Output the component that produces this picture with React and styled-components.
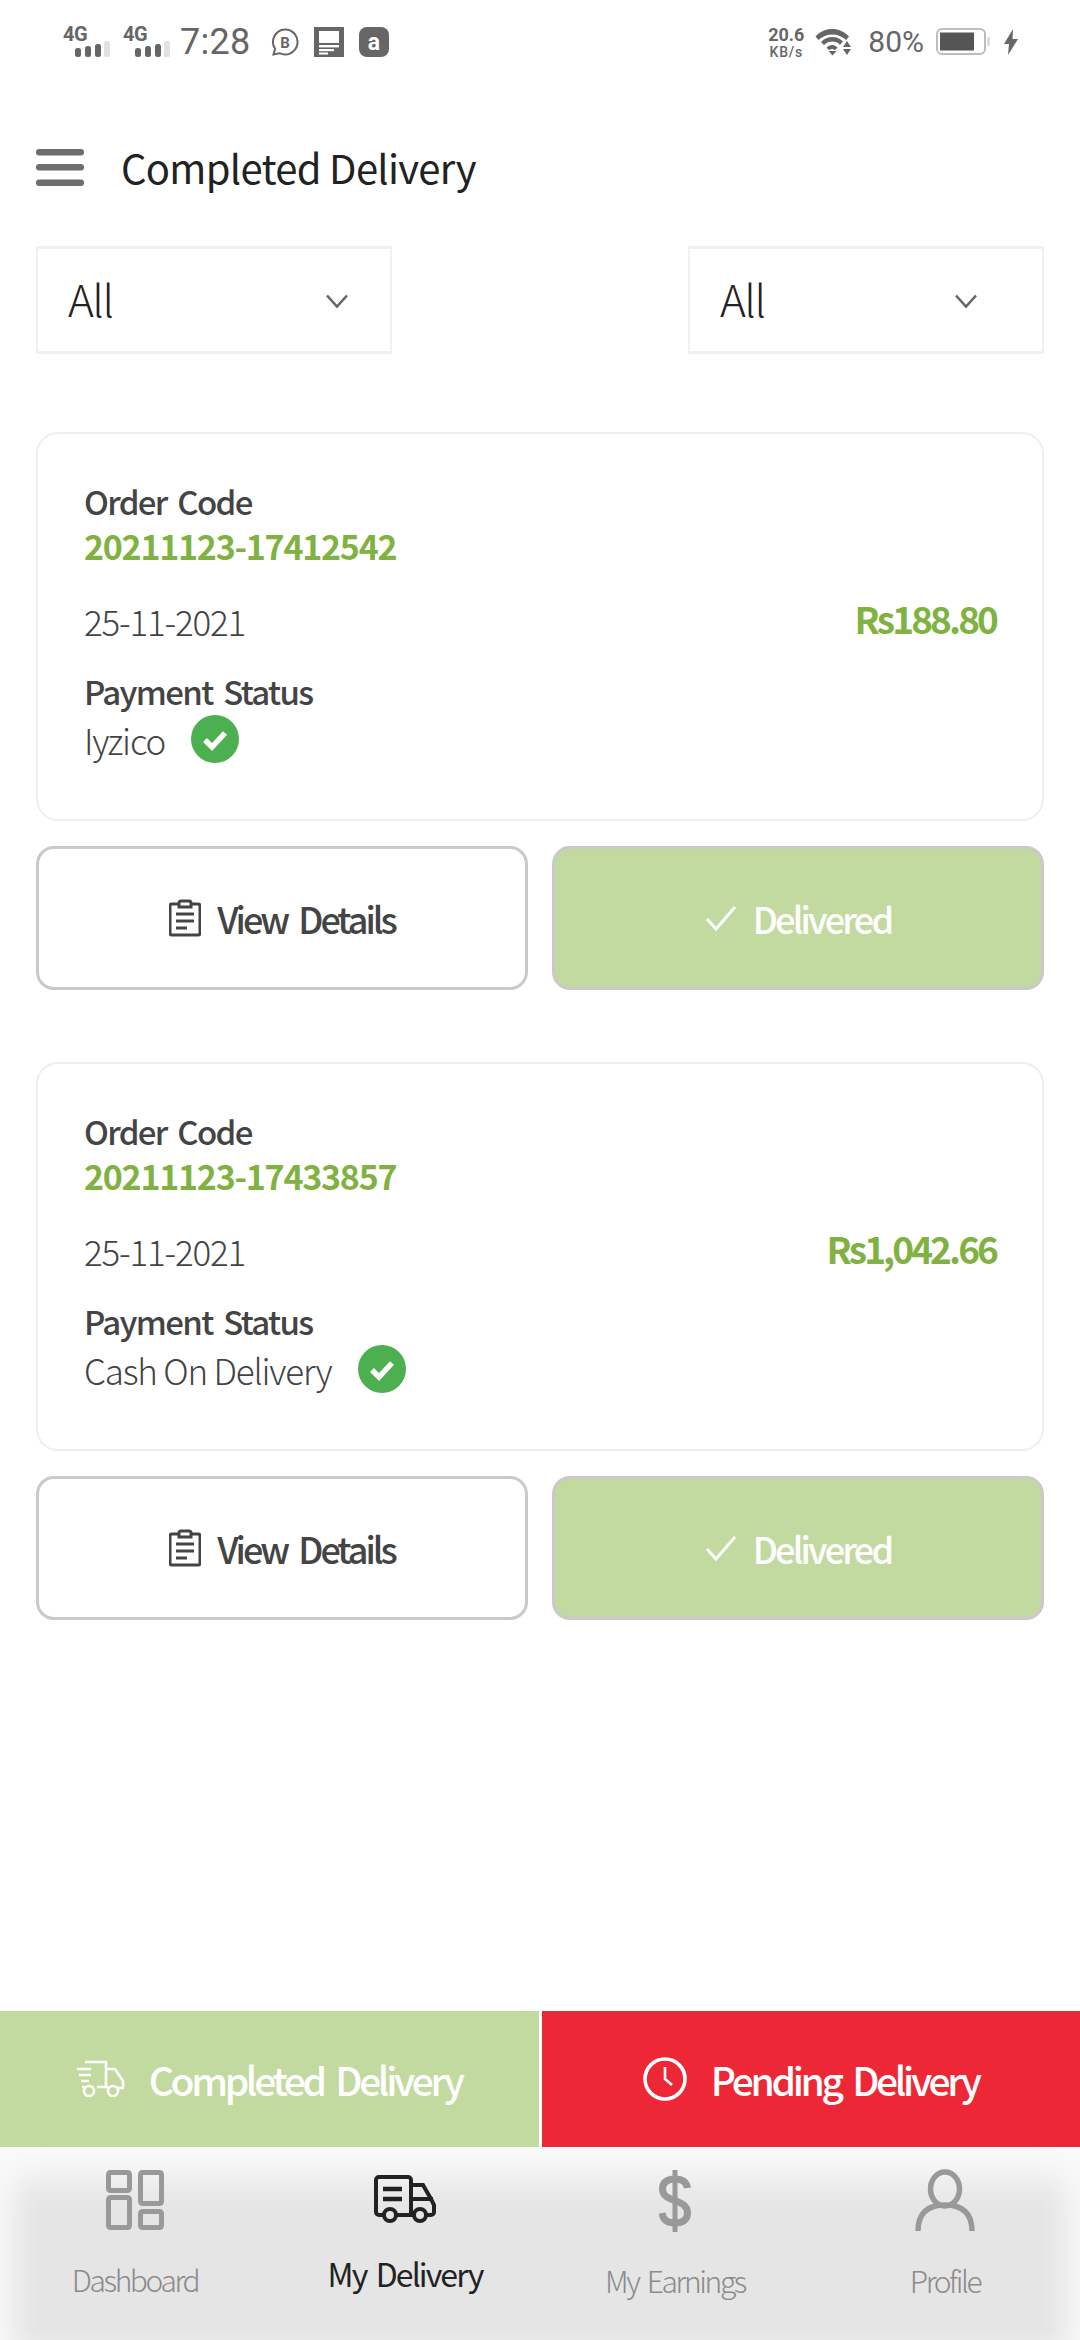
import React from 'react';
import styled, { createGlobalStyle } from 'styled-components';

const GlobalStyle = createGlobalStyle`
  html, body { margin: 0; padding: 0; background: #ffffff; }
  * { box-sizing: border-box; }
`;

const fontStack = '"Noto Sans CJK SC", "Noto Sans", sans-serif';

const Page = styled.div`
  width: 1080px;
  height: 2340px;
  display: flex;
  flex-direction: column;
  font-family: ${fontStack};
  background: #fff;
  overflow: hidden;
`;

const StatusBar = styled.div`
  height: 80px;
  padding: 27px 62px 0 63px;
  display: flex;
  justify-content: space-between;
  align-items: flex-start;
  font-family: Roboto, sans-serif;
  color: #666;
`;

const StatusGroup = styled.div`
  display: flex;
  align-items: center;
  height: 30px;
`;

const SignalBox = styled.div`
  width: 47px;
  height: 30px;
  margin-right: 13px;
  display: flex;
  flex-direction: column;
  font-size: 20px;
  font-weight: 700;
  line-height: 14px;
  letter-spacing: -0.5px;
`;

const Clock = styled.span`
  font-size: 36px;
  line-height: 30px;
  margin-right: 19px;
  margin-left: -3px;
  letter-spacing: 0.3px;
`;

const Speed = styled.div`
  width: 36px;
  margin-right: 11px;
  display: flex;
  flex-direction: column;
  align-items: center;
  font-weight: 700;
  font-size: 18px;
  line-height: 21px;
  span { font-size: 14px; line-height: 15px; font-weight: 500; letter-spacing: 0.8px; }
`;

const Percent = styled.span`
  font-size: 30px;
  line-height: 30px;
  margin: 0 12px 0 16px;
`;

const Header = styled.div`
  height: 166px;
  padding: 8px 36px 0;
  display: flex;
  align-items: center;
  gap: 37px;
`;

const Title = styled.h1`
  margin: 0;
  font-size: 40px;
  font-weight: 400;
  letter-spacing: -0.7px;
  color: #222;
`;

const Filters = styled.div`
  display: flex;
  justify-content: space-between;
  padding: 0 36px;
`;

const Select = styled.div`
  width: 356px;
  height: 108px;
  border: 2px solid #f0f0f0;
  border-top-width: 3px;
  border-bottom-width: 3px;
  display: flex;
  align-items: center;
  justify-content: space-between;
  padding: 0 ${(p) => p.$right}px 5px 30px;
  font-size: 44px;
  font-weight: 300;
  letter-spacing: -1.5px;
  color: #222;
`;

const ChevronSvg = styled.svg`
  margin-top: 6px;
`;

const Orders = styled.div`
  padding: 78px 36px 0;
  display: flex;
  flex-direction: column;
  gap: 72px;
`;

const Order = styled.div`
  display: flex;
  flex-direction: column;
  gap: 25px;
`;

const Card = styled.div`
  height: 389px;
  border: 2px solid #eeeeee;
  border-radius: 22px;
  padding: 44px 46px 0;
  display: flex;
  flex-direction: column;
`;

const Label = styled.div`
  font-size: 33px;
  line-height: 46px;
  font-weight: 500;
  letter-spacing: -1.68px;
  word-spacing: 5px;
  color: #444;
`;

const Code = styled.div`
  font-size: 34px;
  line-height: 44px;
  font-weight: 700;
  letter-spacing: -1.25px;
  color: #7fb241;
`;

const DateRow = styled.div`
  display: flex;
  justify-content: space-between;
  align-items: center;
  height: 46px;
  margin: 29px 0 25px;
`;

const Muted = styled.span`
  font-size: 35px;
  font-weight: 300;
  letter-spacing: -1.2px;
  color: #444;
`;

const Price = styled.span`
  font-size: 37px;
  font-weight: 700;
  letter-spacing: -2.9px;
  color: #7fb241;
  margin-bottom: 5px;
`;

const PayRow = styled.div`
  display: flex;
  align-items: center;
  gap: 26px;
  height: 50px;
`;

const Actions = styled.div`
  display: grid;
  grid-template-columns: 1fr 1fr;
  gap: 24px;
`;

const ActionButton = styled.div`
  height: 144px;
  border: 3px solid #c9c9c9;
  border-radius: 18px;
  background: ${(p) => (p.$done ? '#c2da9f' : '#fff')};
  color: ${(p) => (p.$done ? '#fff' : '#444')};
  display: flex;
  align-items: center;
  justify-content: center;
  gap: 16px;
  font-size: 36px;
  font-weight: 500;
  letter-spacing: ${(p) => (p.$done ? -2.8 : -3)}px;
  word-spacing: 6px;
`;

const Spacer = styled.div`
  flex: 1;
`;

const Tabs = styled.div`
  height: 136px;
  display: flex;
  gap: 3px;
`;

const Tab = styled.div`
  flex: 1;
  background: ${(p) => p.$bg};
  color: #fff;
  display: flex;
  align-items: center;
  justify-content: center;
  gap: 24px;
  font-size: 39px;
  font-weight: 500;
  letter-spacing: -3.35px;
  word-spacing: 6px;
`;

const Nav = styled.div`
  height: 193px;
  background: #e5e5e5;
  box-shadow: inset 0 48px 36px -16px #fafafa, inset 30px 0 24px -14px #f6f6f6, inset -30px 0 24px -14px #f6f6f6;
  display: grid;
  grid-template-columns: repeat(4, 1fr);
`;

const NavItem = styled.div`
  display: flex;
  flex-direction: column;
  align-items: center;
  padding-top: ${(p) => p.$top}px;
  font-size: ${(p) => (p.$active ? 32 : 30)}px;
  font-weight: ${(p) => (p.$active ? 400 : 300)};
  letter-spacing: ${(p) => (p.$active ? -1.9 : -2.4)}px;
  word-spacing: 4px;
  color: ${(p) => (p.$active ? '#222' : '#8b8b8b')};
`;

const NavIcon = styled.div`
  height: ${(p) => p.$h}px;
  display: flex;
  align-items: flex-start;
  justify-content: center;
  margin-bottom: ${(p) => p.$gap}px;
`;

const Signal = () => (
  <SignalBox>
    <span>4G</span>
    <svg width="47" height="16" viewBox="0 0 47 16">
      <rect x="12" y="7" width="6" height="9" rx="2.5" fill="#666" />
      <rect x="22" y="5" width="6" height="11" rx="2.5" fill="#666" />
      <rect x="32" y="3" width="6" height="13" rx="2.5" fill="#666" />
      <rect x="41" y="0" width="6" height="16" rx="1.5" fill="#e2e2e2" />
    </svg>
  </SignalBox>
);

const BubbleIcon = () => (
  <svg width="30" height="30" viewBox="0 0 30 30" style={{ marginRight: 14 }}>
    <path d="M15 2.5a12.5 12.5 0 1 1-5.5 23.7L3.5 27.5l1.6-5.6A12.5 12.5 0 0 1 15 2.5z" fill="none" stroke="#666" strokeWidth="2" />
    <text x="15" y="20.5" textAnchor="middle" fontFamily="Roboto, sans-serif" fontWeight="700" fontSize="15" fill="#666">B</text>
  </svg>
);

const NoteIcon = () => (
  <svg width="30" height="30" viewBox="0 0 30 30" style={{ marginRight: 15 }}>
    <rect width="30" height="30" fill="#666" />
    <rect x="5" y="4" width="20" height="12" fill="#fff" />
    <rect x="5" y="18" width="20" height="2.4" fill="#fff" />
    <rect x="5" y="22" width="15" height="2.2" fill="#fff" />
    <rect x="5" y="25.5" width="9" height="2" fill="#fff" />
  </svg>
);

const AppIcon = () => (
  <svg width="30" height="30" viewBox="0 0 30 30">
    <rect width="30" height="30" rx="8" fill="#666" />
    <text x="15" y="23" textAnchor="middle" fontFamily="Roboto, sans-serif" fontWeight="700" fontSize="23" fill="#fff">a</text>
  </svg>
);

const WifiIcon = () => (
  <svg width="37" height="28" viewBox="0 0 37 28">
    <path d="M0.5 8.5C9 -1.5 25 -1.5 34 8.5L31 12C24 4.5 10.5 4.5 3.5 12z" fill="#666" />
    <path d="M6 14C12 7.5 22 7.5 28 13.5l-3 3.2C21 12.5 13.5 12.5 9 17z" fill="#666" />
    <path d="M11.5 19.5c3.5-3.5 8-3.5 11 0L20 22.3c-2-1.8-4.5-1.8-6 0z" fill="#666" />
    <path d="M13.5 23h8L17.5 27.5z" fill="#666" />
    <path d="M32 13l4 6h-8zM28 21h8l-4 6z" fill="#666" />
  </svg>
);

const BatteryIcon = () => (
  <svg width="54" height="28" viewBox="0 0 54 28">
    <rect x="1" y="1" width="48" height="25" rx="5" fill="none" stroke="#bdbdbd" strokeWidth="2" />
    <rect x="4" y="4.5" width="34" height="18" fill="#555" />
    <rect x="51.5" y="9" width="2" height="9" rx="1" fill="#cfcfcf" />
  </svg>
);

const BoltIcon = () => (
  <svg width="14" height="26" viewBox="0 0 14 26" style={{ marginLeft: 14 }}>
    <path d="M9 0L0 15h5l-1 11 10-16H8.5z" fill="#666" />
  </svg>
);

const Hamburger = () => (
  <svg width="48" height="37" viewBox="0 0 48 37">
    <rect y="0" width="48" height="6.5" rx="3" fill="#6e6e6e" />
    <rect y="15" width="48" height="6.5" rx="3" fill="#6e6e6e" />
    <rect y="30.5" width="48" height="6.5" rx="3" fill="#6e6e6e" />
  </svg>
);

const Chevron = () => (
  <ChevronSvg width="22" height="16" viewBox="0 0 22 16">
    <path d="M1 2.5l10 11 10-11" fill="none" stroke="#666" strokeWidth="2.6" />
  </ChevronSvg>
);

const CheckBadge = () => (
  <svg width="48" height="48" viewBox="0 0 48 48">
    <circle cx="24" cy="24" r="24" fill="#4caf50" />
    <path d="M14 25l7 7 13-14" fill="none" stroke="#fff" strokeWidth="5.5" />
  </svg>
);

const ClipboardIcon = () => (
  <svg width="32" height="38" viewBox="0 0 32 38">
    <path d="M9 5H3a2 2 0 0 0-2 2v27a2 2 0 0 0 2 2h26a2 2 0 0 0 2-2V7a2 2 0 0 0-2-2h-6" fill="none" stroke="#444" strokeWidth="3" />
    <path d="M10 8V4a2 2 0 0 1 2-2h8a2 2 0 0 1 2 2v4z" fill="none" stroke="#444" strokeWidth="3" />
    <path d="M7 15h18M7 22h18M7 29h11" fill="none" stroke="#444" strokeWidth="3" />
  </svg>
);

const TickIcon = () => (
  <svg width="32" height="26" viewBox="0 0 32 26">
    <path d="M2 14l9 10L30 2" fill="none" stroke="#fff" strokeWidth="3" />
  </svg>
);

const FastTruck = () => (
  <svg width="48" height="38" viewBox="0 0 48 38" fill="none" stroke="#fff" strokeWidth="2.6">
    <path d="M8 2h21v25h-9M8 27H5" />
    <path d="M0 9h14M2 15h12M4 21h8" />
    <path d="M29 9h9l8 12v7h-5M29 27h2" />
    <circle cx="12" cy="31" r="5" />
    <circle cx="36" cy="31" r="5" />
  </svg>
);

const ClockIcon = () => (
  <svg width="44" height="44" viewBox="0 0 44 44" fill="none" stroke="#fff" strokeWidth="3.6">
    <circle cx="22" cy="22" r="20" />
    <path d="M22 10v12l7 6" strokeWidth="2.6" />
  </svg>
);

const DashIcon = () => (
  <svg width="58" height="60" viewBox="0 0 58 60" fill="none" stroke="#999" strokeWidth="5">
    <rect x="2.5" y="2.5" width="21" height="18" rx="2" />
    <rect x="34.5" y="2.5" width="21" height="31" rx="2" />
    <rect x="2.5" y="27.5" width="21" height="30" rx="2" />
    <rect x="34.5" y="41.5" width="21" height="16" rx="2" />
  </svg>
);

const TruckIcon = () => (
  <svg width="62" height="48" viewBox="0 0 62 48" fill="none" stroke="#222" strokeWidth="4">
    <path d="M10 40H5a3 3 0 0 1-3-3V5a3 3 0 0 1 3-3h29a3 3 0 0 1 3 3v35H23" />
    <path d="M37 10h12l8 14 3 6v7a3 3 0 0 1-3 3h-5M37 40h3M37 24h22" />
    <path d="M9 14h19M9 24h19" strokeWidth="4.5" />
    <circle cx="16" cy="40" r="6" />
    <circle cx="46" cy="40" r="6" />
  </svg>
);

const DollarIcon = () => (
  <svg width="32" height="62" viewBox="0 0 32 62" fill="none" stroke="#999" strokeWidth="7">
    <path d="M16 0v62" strokeWidth="5" />
    <path d="M28.5 18c-1-6-5-9-12.5-9C8.5 9 3.5 12 3.5 19c0 14 25 9 25 24 0 7-5 10-12.5 10S4 50 3 43" />
  </svg>
);

const ProfileIcon = () => (
  <svg width="60" height="62" viewBox="0 0 60 62" fill="none" stroke="#999" strokeWidth="5.5">
    <ellipse cx="30" cy="20" rx="14.5" ry="17" />
    <path d="M3 62c0-18 10-26 27-26s27 8 27 26" />
  </svg>
);

const orders = [
  { code: '20211123-17412542', date: '25-11-2021', price: 'Rs188.80', method: 'Iyzico' },
  { code: '20211123-17433857', date: '25-11-2021', price: 'Rs1,042.66', method: 'Cash On Delivery' },
];

const navItems = [
  { label: 'Dashboard', icon: <DashIcon />, h: 60, gap: 27, top: 23 },
  { label: 'My Delivery', icon: <TruckIcon />, h: 48, gap: 27, top: 28, active: true },
  { label: 'My Earnings', icon: <DollarIcon />, h: 62, gap: 26, top: 23 },
  { label: 'Profile', icon: <ProfileIcon />, h: 62, gap: 27, top: 22 },
];

export default function App() {
  return (
    <Page>
      <GlobalStyle />
      <StatusBar>
        <StatusGroup>
          <Signal />
          <Signal />
          <Clock>7:28</Clock>
          <BubbleIcon />
          <NoteIcon />
          <AppIcon />
        </StatusGroup>
        <StatusGroup>
          <Speed>
            20.6
            <span>KB/s</span>
          </Speed>
          <WifiIcon />
          <Percent>80%</Percent>
          <BatteryIcon />
          <BoltIcon />
        </StatusGroup>
      </StatusBar>
      <Header>
        <Hamburger />
        <Title>Completed Delivery</Title>
      </Header>
      <Filters>
        <Select $right={42}>
          All
          <Chevron />
        </Select>
        <Select $right={65}>
          All
          <Chevron />
        </Select>
      </Filters>
      <Orders>
        {orders.map((o) => (
          <Order key={o.code}>
            <Card>
              <Label>Order Code</Label>
              <Code>{o.code}</Code>
              <DateRow>
                <Muted>{o.date}</Muted>
                <Price>{o.price}</Price>
              </DateRow>
              <Label>Payment Status</Label>
              <PayRow>
                <Muted>{o.method}</Muted>
                <CheckBadge />
              </PayRow>
            </Card>
            <Actions>
              <ActionButton>
                <ClipboardIcon />
                View Details
              </ActionButton>
              <ActionButton $done>
                <TickIcon />
                Delivered
              </ActionButton>
            </Actions>
          </Order>
        ))}
      </Orders>
      <Spacer />
      <Tabs>
        <Tab $bg="#c2da9f">
          <FastTruck />
          Completed Delivery
        </Tab>
        <Tab $bg="#ee2737">
          <ClockIcon />
          Pending Delivery
        </Tab>
      </Tabs>
      <Nav>
        {navItems.map((n) => (
          <NavItem key={n.label} $active={n.active} $top={n.top}>
            <NavIcon $h={n.h} $gap={n.gap}>{n.icon}</NavIcon>
            {n.label}
          </NavItem>
        ))}
      </Nav>
    </Page>
  );
}
